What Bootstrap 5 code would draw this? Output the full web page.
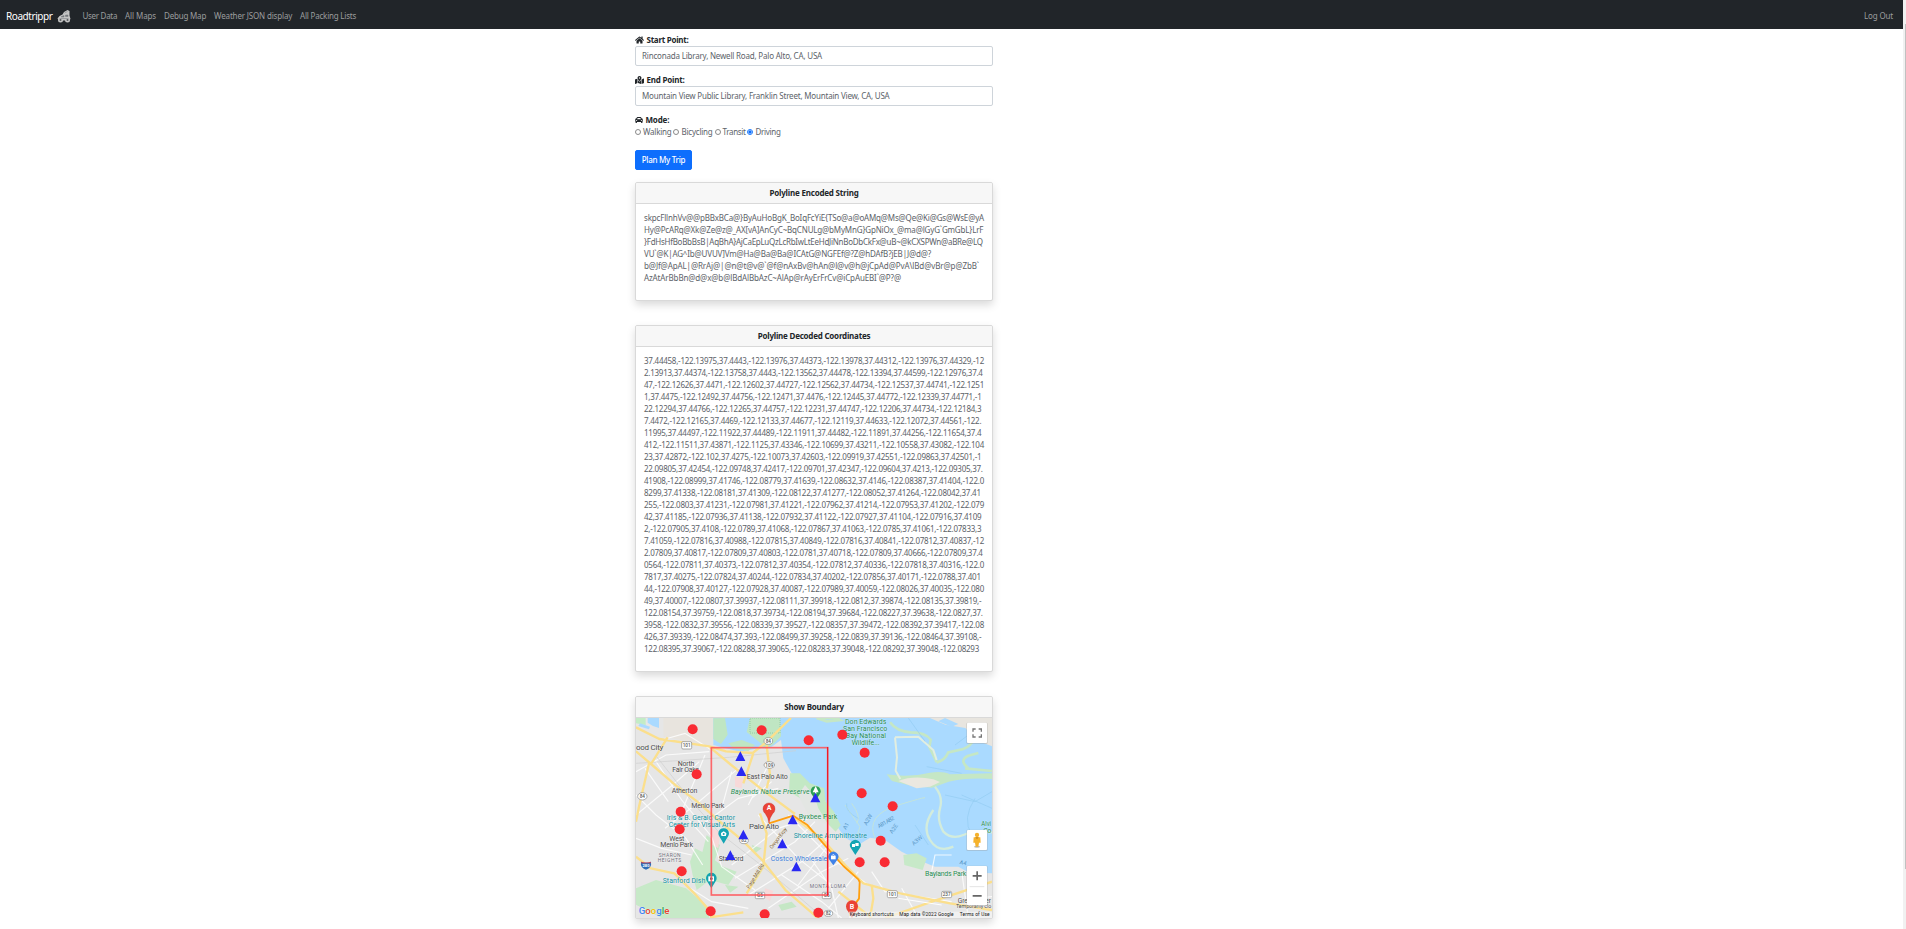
<!DOCTYPE html>
<html lang="en">
<head>
<meta charset="utf-8">
<title>Roadtrippr</title>
<link href="https://cdn.jsdelivr.net/npm/bootstrap@5.3.0/dist/css/bootstrap.min.css" rel="stylesheet">
<style>
html{font-size:8px}
html,body{height:929px;overflow:hidden}
body{font:400 8px/12px "Noto Sans","Open Sans",sans-serif;color:#212529;background:#fff}
.page{width:1903px;height:929px;overflow:hidden}
.scroll-track{width:3px;height:929px;background:#f1f1f1;padding-top:24px}
.scroll-thumb{width:1px;height:845px;margin-left:2px;background:#c1c1c1}
.topbar{height:29px;padding:2px 0 0}
.topbar .navbar-brand{font-size:10px;padding:0;display:flex;align-items:center;line-height:14px;margin-right:8px}
.topbar .nav-link{padding:4px;font-size:8px;line-height:12px;white-space:nowrap;color:#9b9d9e}
.topbar .container-fluid{padding:0 6px}
.fit{white-space:nowrap;width:max-content;display:block}
.planner{margin-left:635px;width:358px;padding-top:5px}
.lbl{height:12px;font-weight:700;display:flex;align-items:center;margin:0}
.lbl svg{height:8px;margin-right:2.5px;fill:#212529}
.planner .form-control{height:20px;font-size:8px;line-height:12px;padding:3px 6px;border-radius:2px;border-color:#ced4da;color:#5c636a;margin-bottom:8px}
.modes{height:12px;color:#5c636a;margin-bottom:12px}
.modes .form-check-input{width:6px;height:6px;margin:0;border:1px solid #8a8a8a;background:#fff;flex:none}
.modes .form-check-input:checked{border-color:#1a7bff;background:radial-gradient(circle,#0d6efd 0 1.2px,#fff 2px)}
.go{height:20px;width:57px;padding:0;font-size:8px;line-height:18px;border-radius:2px;display:flex;justify-content:center;align-items:center;margin-bottom:12px;font-weight:500}
.panel{border-radius:2px;border-color:#d9d9d9;box-shadow:0 4px 8px rgba(0,0,0,.15);margin-bottom:24px}
.panel .card-header{height:21px;padding:0;font-weight:700;background:#f7f7f7;border-color:#d9d9d9;display:flex;align-items:center;justify-content:center}
.panel .card-body{padding:8px 8px 16px;color:#5c6268}
.mapview{display:block;width:356px;height:200px;font-family:Roboto,sans-serif}
.halo{paint-order:stroke;stroke:#fff;stroke-width:2px;stroke-opacity:.5}
</style>
</head>
<body>
<div class="d-flex">
<div class="page">
<nav class="navbar navbar-expand navbar-dark bg-dark topbar">
 <div class="container-fluid">
  <a class="navbar-brand" href="#"><span class="fit" data-w="46.5">Roadtrippr</span>
   <svg width="14" height="14" viewBox="0 0 28 28" style="margin-left:4px"><g fill="#c4c4c4"><path d="M14 6 21 2l4 2v9l2 7-3 3H4l-3-4 4-5 6-3z"/><circle cx="7" cy="22" r="5"/><circle cx="21" cy="22" r="5"/></g><path d="M9 15l5-2v3H8zM17 12h5v3h-5zM15 8l6-3M5 19h18" stroke="#777b7e" fill="#777b7e" stroke-width="1"/><circle cx="7" cy="22" r="2" fill="#55595c"/><circle cx="21" cy="22" r="2" fill="#55595c"/></svg></a>
  <div class="navbar-nav me-auto">
   <a class="nav-link" href="#"><span class="fit" data-w="34.6">User Data</span></a>
   <a class="nav-link" href="#"><span class="fit" data-w="31">All Maps</span></a>
   <a class="nav-link" href="#"><span class="fit" data-w="42">Debug Map</span></a>
   <a class="nav-link" href="#"><span class="fit" data-w="78">Weather JSON display</span></a>
   <a class="nav-link" href="#"><span class="fit" data-w="56">All Packing Lists</span></a>
  </div>
  <div class="navbar-nav"><a class="nav-link" href="#"><span class="fit" data-w="29">Log Out</span></a></div>
 </div>
</nav>
<main class="planner">
 <label class="lbl"><svg viewBox="0 0 576 512"><path d="M280.37 148.26L96 300.11V464a16 16 0 0 0 16 16l112.06-.29a16 16 0 0 0 15.92-16V368a16 16 0 0 1 16-16h64a16 16 0 0 1 16 16v95.64a16 16 0 0 0 16 16.05L464 480a16 16 0 0 0 16-16V300L295.67 148.26a12.19 12.19 0 0 0-15.3 0zM571.6 251.47L488 182.56V44.05a12 12 0 0 0-12-12h-56a12 12 0 0 0-12 12v72.61L318.47 43a48 48 0 0 0-61 0L4.34 251.47a12 12 0 0 0-1.6 16.9l25.5 31A12 12 0 0 0 45.15 301l235.22-193.74a12.19 12.19 0 0 1 15.3 0L530.9 301a12 12 0 0 0 16.9-1.6l25.5-31a12 12 0 0 0-1.7-16.93z"/></svg><span class="fit" data-w="42">Start Point:</span></label>
 <div class="form-control"><span class="fit" data-w="180">Rinconada Library, Newell Road, Palo Alto, CA, USA</span></div>
 <label class="lbl"><svg viewBox="0 0 576 512"><path d="M288 0c-69.59 0-126 56.41-126 126 0 56.26 82.35 158.8 113.9 196.02 6.39 7.54 17.82 7.54 24.2 0C331.65 284.8 414 182.26 414 126 414 56.41 357.59 0 288 0zm0 168c-23.2 0-42-18.8-42-42s18.8-42 42-42 42 18.8 42 42-18.8 42-42 42zM20.12 215.95A32.006 32.006 0 0 0 0 245.66v250.32c0 11.32 11.43 19.06 21.94 14.86L160 448V214.92c-8.84-15.98-16.07-31.54-21.25-46.42L20.12 215.95zM288 359.67c-14.07 0-27.38-6.18-36.51-16.96-19.66-23.2-40.57-49.62-59.49-76.72v182l192 64V266c-18.92 27.09-39.82 53.52-59.49 76.72-9.13 10.77-22.44 16.95-36.51 16.95zm266.06-198.51L416 224v288l139.88-55.95A31.996 31.996 0 0 0 576 426.34V176.02c0-11.32-11.43-19.06-21.94-14.86z"/></svg><span class="fit" data-w="38">End Point:</span></label>
 <div class="form-control"><span class="fit" data-w="247.5">Mountain View Public Library, Franklin Street, Mountain View, CA, USA</span></div>
 <label class="lbl"><svg viewBox="0 0 512 512"><path d="M499.99 176h-59.87l-16.64-41.6C406.38 91.63 365.57 64 319.5 64h-127c-46.06 0-86.88 27.63-103.99 70.4L71.87 176H12.01C4.2 176-1.53 183.34.37 190.91l6 24C7.7 220.25 12.5 224 18.01 224h20.07C24.65 235.73 16 252.78 16 272v48c0 16.12 6.16 30.67 16 41.93V416c0 17.67 14.33 32 32 32h32c17.67 0 32-14.33 32-32v-32h256v32c0 17.67 14.33 32 32 32h32c17.67 0 32-14.33 32-32v-54.07c9.84-11.25 16-25.8 16-41.93v-48c0-19.22-8.65-36.27-22.07-48H494c5.51 0 10.31-3.75 11.64-9.09l6-24c1.89-7.57-3.84-14.91-11.65-14.91zm-352.06-17.83c7.29-18.22 24.94-30.17 44.57-30.17h127c19.63 0 37.28 11.95 44.57 30.17L384 208H128l19.93-49.83zM96 319.8c-19.2 0-32-12.76-32-31.9S76.8 256 96 256s48 28.71 48 47.85-28.8 15.95-48 15.95zm320 0c-19.2 0-48 3.19-48-15.95S396.8 256 416 256s32 12.76 32 31.9-12.8 31.9-32 31.9z"/></svg><span class="fit" data-w="23.7">Mode:</span></label>
 <div class="modes d-flex align-items-center">
  <input class="form-check-input" type="radio" name="m"><span class="fit" style="margin:0 1.500px 0 2px" data-w="28.5">Walking</span>
  <input class="form-check-input" type="radio" name="m"><span class="fit" style="margin:0 2px 0 2.500px" data-w="31">Bicycling</span>
  <input class="form-check-input" type="radio" name="m"><span class="fit" style="margin:0 1.500px 0 2px" data-w="23">Transit</span>
  <input class="form-check-input" type="radio" name="m" checked><span class="fit" style="margin-left:2.5px" data-w="25">Driving</span>
 </div>
 <button class="btn btn-primary go" type="button"><span class="fit" data-w="43.5">Plan My Trip</span></button>

 <section class="card panel">
  <div class="card-header"><span class="fit" data-w="89">Polyline Encoded String</span></div>
  <div class="card-body">
   <span class="fit" data-w="340">skpcFllnhVv@@pBBxBCa@}ByAuHoBgK_BoIqFcYiE{TSo@a@oAMq@Ms@Qe@Ki@Gs@WsE@yA</span>
   <span class="fit" data-w="339.3">Hy@PcARq@Xk@Ze@z@_AX[vA]AnCyC~BqCNULg@bMyMnG}GpNiOx_@ma@lGyG`GmGbL}LrF</span>
   <span class="fit" data-w="338.7">}FdHsHfBoBbBsB|AqBhA}AjCaEpLuQzLcRbIwLtEeHdJiNnBoDbCkFx@uB~@kCXSPWn@aBRe@LQ</span>
   <span class="fit" data-w="287">VU`@K|AG^Ib@UVUV]Vm@Ha@Ba@Ba@ICAtG@NGFEf@?Z@hDAfB?jEB|J@d@?</span>
   <span class="fit" data-w="335">b@Jf@ApAL|@RrAj@|@n@t@v@`@f@nAxBv@hAn@l@v@h@jCpAd@PvA\lBd@vBr@p@ZbB`</span>
   <span class="fit" data-w="257">AzAtArBbBn@d@x@b@lBdAlBbAzC~AlAp@rAyErFrCv@iCpAuEBI`@P?@</span>
  </div>
 </section>

 <section class="card panel">
  <div class="card-header"><span class="fit" data-w="112.5">Polyline Decoded Coordinates</span></div>
  <div class="card-body">
   <span class="fit" data-w="340">37.44458,-122.13975,37.4443,-122.13976,37.44373,-122.13978,37.44312,-122.13976,37.44329,-12</span>
   <span class="fit" data-w="338.7">2.13913,37.44374,-122.13758,37.4443,-122.13562,37.44478,-122.13394,37.44599,-122.12976,37.4</span>
   <span class="fit" data-w="340">47,-122.12626,37.4471,-122.12602,37.44727,-122.12562,37.44734,-122.12537,37.44741,-122.1251</span>
   <span class="fit" data-w="337.5">1,37.4475,-122.12492,37.44756,-122.12471,37.4476,-122.12445,37.44772,-122.12339,37.44771,-1</span>
   <span class="fit" data-w="337.3">22.12294,37.44766,-122.12265,37.44757,-122.12231,37.44747,-122.12206,37.44734,-122.12184,3</span>
   <span class="fit" data-w="337.3">7.4472,-122.12165,37.4469,-122.12133,37.44677,-122.12119,37.44633,-122.12072,37.44561,-122.</span>
   <span class="fit" data-w="337.3">11995,37.44497,-122.11922,37.44489,-122.11911,37.44482,-122.11891,37.44256,-122.11654,37.4</span>
   <span class="fit" data-w="340">412,-122.11511,37.43871,-122.1125,37.43346,-122.10699,37.43211,-122.10558,37.43082,-122.104</span>
   <span class="fit" data-w="337.3">23,37.42872,-122.102,37.4275,-122.10073,37.42603,-122.09919,37.42551,-122.09863,37.42501,-1</span>
   <span class="fit" data-w="338.7">22.09805,37.42454,-122.09748,37.42417,-122.09701,37.42347,-122.09604,37.4213,-122.09305,37.</span>
   <span class="fit" data-w="340">41908,-122.08999,37.41746,-122.08779,37.41639,-122.08632,37.4146,-122.08387,37.41404,-122.0</span>
   <span class="fit" data-w="336.7">8299,37.41338,-122.08181,37.41309,-122.08122,37.41277,-122.08052,37.41264,-122.08042,37.41</span>
   <span class="fit" data-w="340">255,-122.0803,37.41231,-122.07981,37.41221,-122.07962,37.41214,-122.07953,37.41202,-122.079</span>
   <span class="fit" data-w="337.3">42,37.41185,-122.07936,37.41138,-122.07932,37.41122,-122.07927,37.41104,-122.07916,37.4109</span>
   <span class="fit" data-w="337.3">2,-122.07905,37.4108,-122.0789,37.41068,-122.07867,37.41063,-122.0785,37.41061,-122.07833,3</span>
   <span class="fit" data-w="340">7.41059,-122.07816,37.40988,-122.07815,37.40849,-122.07816,37.40841,-122.07812,37.40837,-12</span>
   <span class="fit" data-w="338.7">2.07809,37.40817,-122.07809,37.40803,-122.0781,37.40718,-122.07809,37.40666,-122.07809,37.4</span>
   <span class="fit" data-w="340">0564,-122.07811,37.40373,-122.07812,37.40354,-122.07812,37.40336,-122.07818,37.40316,-122.0</span>
   <span class="fit" data-w="336.7">7817,37.40275,-122.07824,37.40244,-122.07834,37.40202,-122.07856,37.40171,-122.0788,37.401</span>
   <span class="fit" data-w="340">44,-122.07908,37.40127,-122.07928,37.40087,-122.07989,37.40059,-122.08026,37.40035,-122.080</span>
   <span class="fit" data-w="337.3">49,37.40007,-122.0807,37.39937,-122.08111,37.39918,-122.0812,37.39874,-122.08135,37.39819,-</span>
   <span class="fit" data-w="338.7">122.08154,37.39759,-122.0818,37.39734,-122.08194,37.39684,-122.08227,37.39638,-122.0827,37.</span>
   <span class="fit" data-w="340">3958,-122.0832,37.39556,-122.08339,37.39527,-122.08357,37.39472,-122.08392,37.39417,-122.08</span>
   <span class="fit" data-w="337.3">426,37.39339,-122.08474,37.393,-122.08499,37.39258,-122.0839,37.39136,-122.08464,37.39108,-</span>
   <span class="fit" data-w="335">122.08395,37.39067,-122.08288,37.39065,-122.08283,37.39048,-122.08292,37.39048,-122.08293</span>
  </div>
 </section>

 <section class="card panel">
  <div class="card-header"><span class="fit" data-w="59.5">Show Boundary</span></div>
  <svg class="mapview" viewBox="33 99 1068 600" preserveAspectRatio="none">
   <rect x="33" y="99" width="1068" height="602" fill="#e6e6e6"/>
   <!-- salt flats and city blocks -->
   <path d="M115 99H265V190L170 165 115 155z" fill="#e8e4de"/>
   <path d="M33 99H62V120L33 115z" fill="#c3ecc6"/>
   <path d="M68 99h34v30l-18-6-16-10zM45 115l30 10-3 8-32-10z" fill="#aadaff"/>
   <!-- bay -->
   <path d="M265 99H1101V565L1030 562 1000 545 930 545 880 525 830 500 780 465 735 458 700 480 660 458 640 430 615 385 600 345 570 350 545 300 500 265 475 220 468 165 440 185 400 190 345 200 265 180z" fill="#aadaff"/>
   <path d="M265 100l35-1 8 50-20 28-23-15zM375 99h90l3 55-25 25-20 12-20-20-38-30zM310 175l40-10 40 15-20 18-45-8z" fill="#bfe6c3"/>
   <path d="M375 99h90v45h-90z" fill="none" stroke="#7fbf92" stroke-width="2" stroke-dasharray="3 3"/>
   <path d="M495 265l30 0 30 30 42 15 5 40 25 30 20 40-15 20-40-40-40-45-60-35z" fill="#c3e8c4"/>
   <path d="M540 300q30 30 40 70l30 50-60-30-30-60z" fill="#e3e6e3"/>
   <path d="M575 99h60l10 6-40 4zM795 112q20 28 62 30 45 0 60 22l-4 22q15 30 22 46" stroke="#c5e7c5" fill="none" stroke-width="8"/>
   <path d="M935 232q25-5 35-30l45-10q25-10 30-30l56-10M1030 250q-30-25 0-38l30-8M1020 250l81 8" stroke="#c5e7c5" fill="none" stroke-width="8"/>
   <path d="M915 99h186v85l-50-20-30-35-60-10z" fill="#e8e5df"/>
   <path d="M960 99l40 18-20 8-40-16z" fill="#aadaff"/>
   <path d="M785 268q70 10 130-5 40-5 60 5l126-3v17q-70-6-130 8l-50 18-60-5-60-15z" fill="#c5e7c5"/>
   <path d="M820 288q45-18 105-5l20 8-30 14-40 5z" fill="#ebe8e0"/>
   <path d="M810 157l6 60-4 40 14 25M810 157l70-2 45 40 10 30" fill="none" stroke="#e2eee0" stroke-width="6"/>
   <path d="M930 305q25 30 15 65t10 70q25 25 60 10t86-8M925 375q-35 50-10 90t70 20" fill="none" stroke="#d3ecdc" stroke-width="7"/>
   <path d="M680 355q30 40 15 60M660 360l45 65-20 60M750 460q-30-70 70-100t75-20" fill="none" stroke="#c3e4dc" stroke-width="3"/>
   <path d="M960 330l90 20 51-30M1050 340q-40 60-10 110M850 99l50 70M990 180l80-60M905 245l105 20M870 420l40 60M1010 330l91 40M700 400q-40-20-35-45" fill="none" stroke="#93ccf2" stroke-width="2"/>
   <!-- parks -->
   <path d="M210 490l40 20 45 35 40 15-25 40-55-15-40 30-12-45-8-40zM245 450l40 30-15 45-40-15zM33 610l60-25 90 25 60 50 10 39H110l-77-40zM835 510l40-5 30 15-12 35-55-15z" fill="#c7e9c8"/>
   <path d="M330 275l25 5-5 30-20-5zM260 430l25 10-5 50-18-10zM420 610l25 8-10 30-20-12z" fill="#f7d9d9"/>
   <path d="M460 660l40-10 15 15-45 12zM300 600l40 5-25 18zM380 480l30 10-20 15z" fill="#c5e7c5"/>
   <!-- local streets -->
   <g stroke="#fff" stroke-opacity=".8" stroke-width="3.500" fill="none"><path d="M110 165l70-20 80 50M90 225l80 120 90 110 30 90 100 70M33 260l90-50 130-10M33 390l110-90 80-70M120 430l90-70 130-110M160 370l90 100M130 350L60 250M33 330l60 60 90 70 50 80M230 420l110-80 120-30M290 370l30-110M380 340l60-50M320 540l140-110 90-30M330 580l180-110 60-60M370 630l160-100 90-80M430 670l160-110 80-40M470 570l120 80 60 49M400 390l120 130 100 80M490 390l130 130 110 80M610 480l-90 120M700 560l-90 110M740 560l40 60 200 30M920 560l10-50 50 0M830 610l50 89M200 510l-90-20-77-30M180 600l80 50 110 20M240 210l-70 170M430 240l-60 120M550 510l70 100 20 89M1010 560l20 139"/></g>
   <g stroke="#cfcfcf" stroke-width="2" fill="none"><path d="M95 215l110 140 80 90 110 85 120 100 80 69M33 235l280-18 200-20"/></g>
   <!-- main roads -->
   <g stroke="#fbdf8c" stroke-width="7" fill="none" stroke-linejoin="round"><path d="M33 127l70 35 150 22 50 15 80 5 40-32 75-73M33 199l45 38 75 65 60 45 80 70 60 50 60 60 70 90 70 60 90 80M72 235l-30 130-9 45M78 237l50-80M255 187l60 50 100 80 95 70M425 180l10 90-10 40M385 205l-30 90M365 625l50-80 10-100-20-60M33 515l45 35 70 15 60 60 60 68M255 697l100-15"/><path d="M510 400l80 60 75 85 50 50 110 30 150 30 126 20M1101 590l-180 60-140 49M740 600l5 40-10 59M640 620l100 79"/></g>
   <g stroke="#fff" stroke-width="3" fill="none"><path d="M820 640l130 20M1000 645l101-10"/></g>
   <!-- driving route -->
   <path d="M432 415l73-23 41 27 54 62 55 62 45 40 4 8 -2 50-20 27" fill="none" stroke="#ff9f0f" stroke-width="5.500" stroke-linejoin="round"/>
   <!-- road shields -->
   <g fill="#fff" stroke="#888" stroke-width="2"><rect x="170" y="170" width="30" height="22" rx="4"/><ellipse cx="430" cy="168" rx="13" ry="10"/><ellipse cx="433" cy="240" rx="16" ry="10"/><ellipse cx="52" cy="334" rx="14" ry="11"/><ellipse cx="357" cy="467" rx="13" ry="9"/><rect x="391" y="622" width="28" height="19" rx="3"/><rect x="592" y="622" width="26" height="19" rx="3"/><rect x="787" y="617" width="30" height="21" rx="4"/><rect x="950" y="619" width="30" height="19" rx="4"/><ellipse cx="610" cy="685" rx="13" ry="9"/></g>
   <g font-size="14" font-weight="500" text-anchor="middle" fill="#555"><text x="185" y="186">101</text><text x="430" y="173">84</text><text x="433" y="245">109</text><text x="52" y="339">84</text><text x="357" y="472">82</text><text x="405" y="637">G5</text><text x="605" y="637">G6</text><text x="802" y="633">101</text><text x="965" y="634">237</text><text x="610" y="690">82</text></g>
   <path d="M48 530q15 6 30 0 3 18-15 24-18-6-15-24z" fill="#2f6eb8"/><path d="M49 530q14 5 28 0v5H49z" fill="#d8434e"/><text x="63" y="547" font-size="12" font-weight="700" text-anchor="middle" fill="#fff">280</text>
   <!-- place labels -->
   <g fill="#4c4c4c" font-size="21" class="halo">
    <text x="33" y="196" font-size="24" textLength="82">ood City</text><text x="158" y="243" textLength="50">North</text><text x="142" y="261" textLength="80">Fair Oaks</text><text x="140" y="325" textLength="77">Atherton</text><text x="199" y="370" textLength="99">Menlo Park</text><text x="365" y="283" textLength="123">East Palo Alto</text><text x="372" y="432" font-size="24" textLength="90">Palo Alto</text><text x="133" y="467" textLength="45">West</text><text x="106" y="487" textLength="98">Menlo Park</text><text x="281" y="528" textLength="74">Stanford</text>
    <g fill="#6f6f7c" font-size="15"><text x="101" y="517" textLength="66">SHARON</text><text x="98" y="531" textLength="71">HEIGHTS</text><text x="554" y="608" textLength="108">MONTA LOMA</text></g>
    <text x="998" y="654" font-size="20" textLength="100">Great Amer</text><text x="993" y="670" font-size="16" textLength="106">Temporarily clo</text>
    <g fill="#7a5c2e" font-size="16"><text transform="translate(441 493) rotate(-53)" textLength="76">Oregon Expy</text><text transform="translate(373 612) rotate(-58)" textLength="84">Page Mill Rd</text></g>
    <g fill="#238a50"><text x="317" y="326" font-style="italic" textLength="237">Baylands Nature Preserve</text><text x="521" y="401" textLength="116">Byxbee Park</text><text x="900" y="574" textLength="124">Baylands Park</text><text x="1069" y="423" textLength="29" lengthAdjust="spacingAndGlyphs">Alvi</text><text x="1075" y="443" textLength="24">Co</text><text x="660" y="116" textLength="124">Don Edwards</text><text x="654" y="137" textLength="133">San Francisco</text><text x="662" y="158" textLength="121">Bay National</text><text x="680" y="179" textLength="84">Wildlife...</text></g>
    <g fill="#0f90a0"><text x="125" y="405" textLength="205">Iris &amp; B. Gerald Cantor</text><text x="131" y="425" textLength="199">Center for Visual Arts</text><text x="506" y="458" textLength="220">Shoreline Amphitheatre</text><text x="113" y="595" textLength="128">Stanford Dish</text></g>
    <text x="437" y="528" fill="#3579d6" textLength="170">Costco Wholesale</text>
   </g>
   <g fill="#5795c5" font-size="17"><text transform="translate(663 435) rotate(-62)">A1</text><text transform="translate(725 422) rotate(-60)">A2W</text><text transform="translate(762 430) rotate(-30)" textLength="55">AB1 AB2</text><text transform="translate(802 447) rotate(-55)">A2E</text><text transform="translate(866 482) rotate(-40)">A3W</text><text transform="translate(1003 536) rotate(15)">A4</text></g>
   <!-- place pins -->
   <g><path d="M572 346l-13-20a15 15 0 1 1 26 0z" fill="#2d9f56"/><path d="M572 303l9 19h-18zM570 320h4v7h-4z" fill="#fff"/>
   <path d="M296 476l-12-20a16 16 0 1 1 24 0z" fill="#14a5b4"/><path d="M288 449v-5l8-5 8 5v5zM289 443h14v10h-14z" fill="#fff"/><circle cx="296" cy="447" r="3" fill="#14a5b4"/>
   <path d="M259 610l-12-20a16 16 0 1 1 24 0z" fill="#12a4af"/><path d="M250 574h17v15h-17z" fill="#fff"/><circle cx="259" cy="581" r="4" fill="#12606a"/>
   <path d="M691 510l-13-20a16 16 0 1 1 26 0z" fill="#14a5b4"/><path d="M681 477h9v9h-9zM691 474h10v9h-10z" fill="#fff"/>
   <path d="M625 541l-12-17a15 15 0 1 1 24 0z" fill="#3f82e8"/><path d="M618 512h14v11h-14z" fill="#fff"/><path d="M621 512q4-9 8 0" fill="none" stroke="#fff" stroke-width="2"/></g>
   <!-- boundary -->
   <rect x="259" y="188" width="349" height="442" fill="none" stroke="#ff5055" stroke-width="5" stroke-opacity=".85"/>
   <path d="M608 186V632" stroke="#f20c18" stroke-width="3"/>
   <!-- route ends -->
   <path d="M432 415q-2-18-11-29a18 18 0 1 1 22 0q-9 11-11 29z" fill="#ea4335" stroke="#c5221f"/><text x="432" y="375" font-size="21" font-weight="700" fill="#fff" text-anchor="middle">A</text>
   <circle cx="681" cy="664" r="18" fill="#ea4335"/><path d="M665 672l16 27 16-27z" fill="#ea4335"/><text x="681" y="673" font-size="21" font-weight="700" fill="#fff" text-anchor="middle">B</text>
   <!-- samples outside the boundary -->
   <g fill="#f92b33"><circle cx="203" cy="133" r="15"/><circle cx="410" cy="136" r="15"/><circle cx="551" cy="166" r="15"/><circle cx="652" cy="149" r="15"/><circle cx="719" cy="203" r="15"/><circle cx="215" cy="268" r="15"/><circle cx="710" cy="325" r="15"/><circle cx="803" cy="364" r="15"/><circle cx="167" cy="380" r="15"/><circle cx="164" cy="433" r="15"/><circle cx="170" cy="559" r="15"/><circle cx="767" cy="467" r="15"/><circle cx="704" cy="532" r="15"/><circle cx="779" cy="532" r="15"/><circle cx="257" cy="679" r="15"/><circle cx="419" cy="688" r="15"/><circle cx="580" cy="683" r="15"/></g>
   <!-- samples inside -->
   <g fill="#2929f2"><path d="M346 199l15 29h-30zM349 244l15 29h-30zM571 323l15 29h-30zM503 389l15 29h-30zM355 434l15 29h-30zM472 461l15 29h-30zM316 496l15 29h-30zM514 530l15 29h-30z"/></g>
   <!-- attribution and controls -->
   <rect x="672" y="680" width="429" height="20" fill="#f5f5f5" fill-opacity=".7"/>
   <g font-size="14.500" fill="#111"><text x="674" y="693" textLength="132">Keyboard shortcuts</text><text x="823" y="693" textLength="163">Map data ©2022 Google</text><text x="1004" y="693" textLength="90">Terms of Use</text></g>
   <text x="41" y="687" font-size="29" font-weight="500" textLength="92" class="halo"><tspan fill="#4285f4">G</tspan><tspan fill="#ea4335">o</tspan><tspan fill="#fbbc04">o</tspan><tspan fill="#4285f4">g</tspan><tspan fill="#34a853">l</tspan><tspan fill="#ea4335">e</tspan></text>
   <g fill="#999" opacity=".35"><rect x="1024" y="113" width="64" height="64" rx="4"/><rect x="1024" y="434" width="64" height="64" rx="4"/><rect x="1024" y="542" width="64" height="122" rx="4"/></g>
   <g fill="#fff"><rect x="1026" y="113" width="60" height="61" rx="3"/><rect x="1026" y="435" width="60" height="60" rx="3"/><rect x="1026" y="543" width="60" height="118" rx="3"/></g>
   <path d="M1044 140v-8h8M1061 132h8v8M1069 148v8h-8M1052 156h-8v-8" fill="none" stroke="#777" stroke-width="4"/>
   <path d="M1043 572.5h27M1056.500 559v27M1043 632.500h27" stroke="#666" stroke-width="5"/><path d="M1034 605h44" stroke="#ddd" stroke-width="2.500"/>
   <ellipse cx="1056" cy="485" rx="9" ry="3" fill="#bbb"/><circle cx="1056" cy="450" r="6.500" fill="#f5b22c"/><path d="M1046 457h20l1 16h-5l-2 12h-8l-2-12h-5z" fill="#f5b22c"/><path d="M1050 457h12l-6 5z" fill="#c98514"/>
  </svg>
 </section>
</main>
</div>
<div class="scroll-track"><div class="scroll-thumb"></div></div>
</div>
<script src="https://cdn.jsdelivr.net/npm/bootstrap@5.3.0/dist/js/bootstrap.bundle.min.js"></script>
<script>
// Track each line of text to the width set in data-w.
document.querySelectorAll('.fit[data-w]').forEach(function (el) {
  var gap = parseFloat(el.dataset.w) - el.getBoundingClientRect().width;
  el.style.letterSpacing = (gap / el.textContent.length) + 'px';
});
</script>
</body>
</html>
